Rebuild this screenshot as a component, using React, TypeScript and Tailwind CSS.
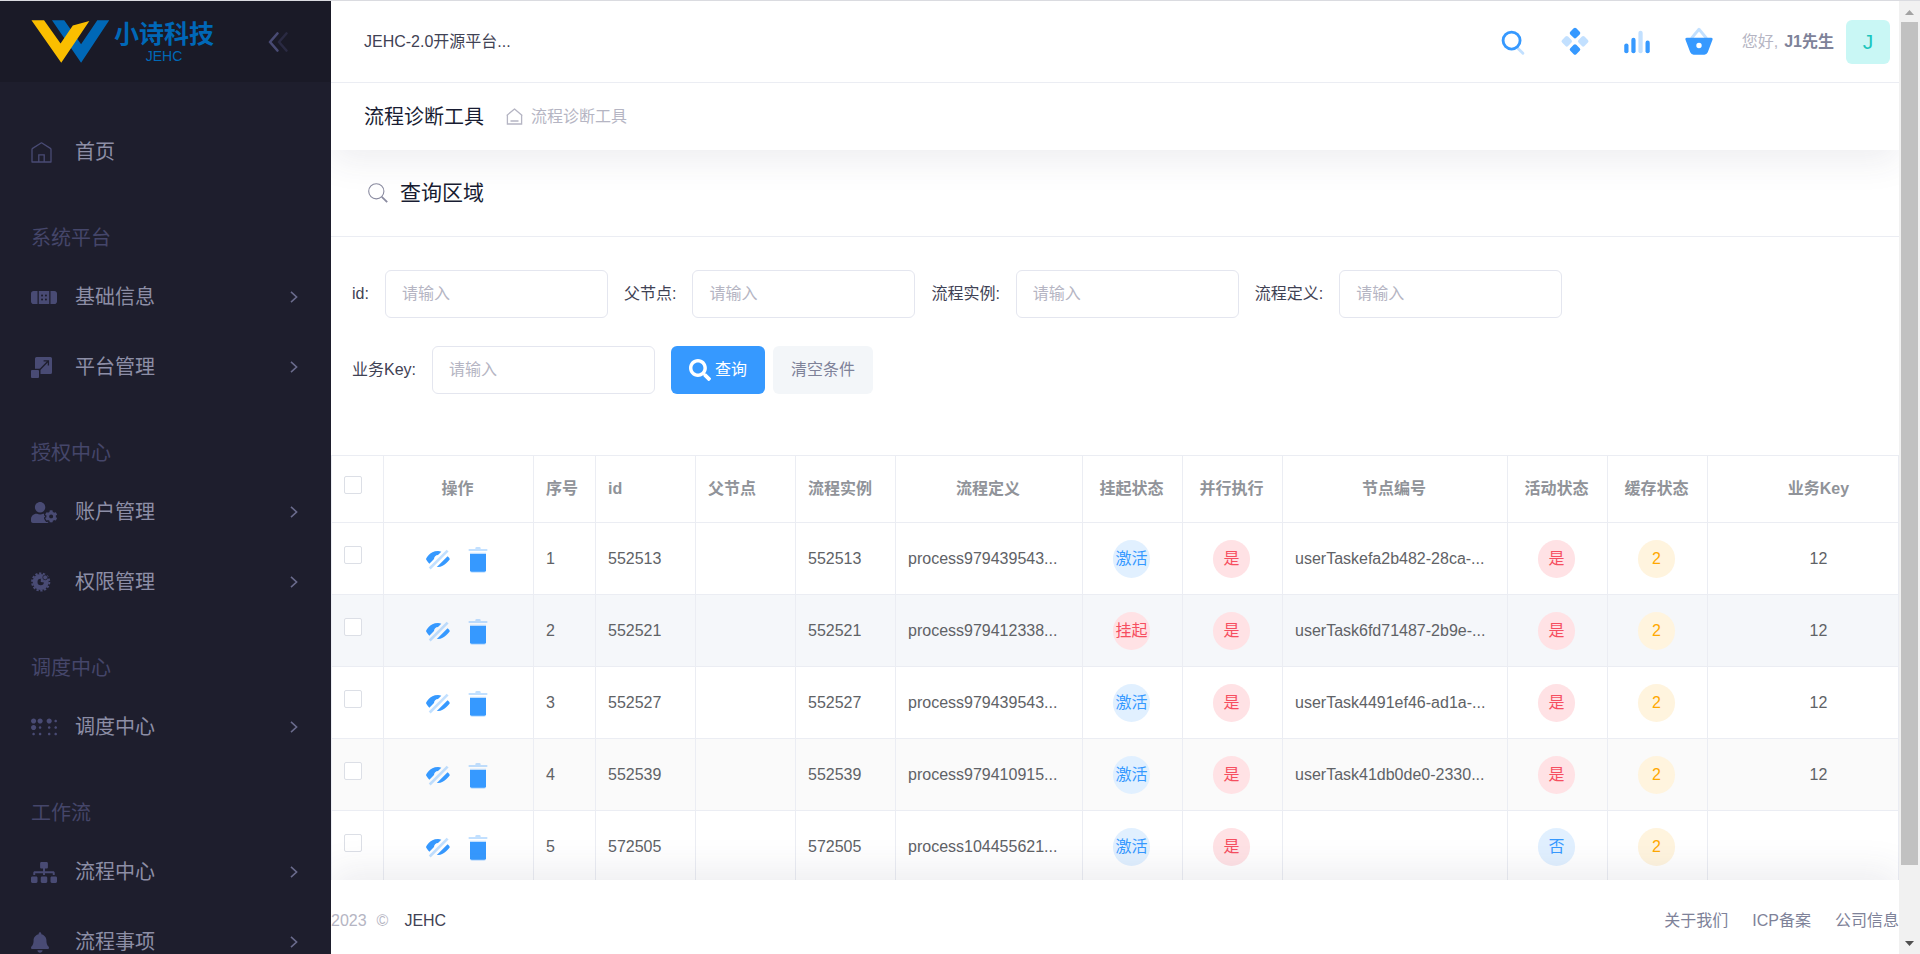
import React from 'react';
import { FaBandAid, FaBell, FaBraille, FaSearch, FaSitemap, FaUserCog } from 'react-icons/fa';

type Tone = 'primary' | 'danger' | 'warning';

interface ProcessRow {
  no: number;
  id: string;
  parent?: string;
  instance: string;
  definition: string;
  suspended: boolean;
  node: string;
  active: boolean;
  cache: number;
  businessKey: string;
}

interface MenuEntry {
  label: string;
  icon: React.ReactNode;
}

const rows: ProcessRow[] = [
  { no: 1, id: '552513', instance: '552513', definition: 'process979439543...', suspended: false, node: 'userTaskefa2b482-28ca-...', active: true, cache: 2, businessKey: '12' },
  { no: 2, id: '552521', instance: '552521', definition: 'process979412338...', suspended: true, node: 'userTask6fd71487-2b9e-...', active: true, cache: 2, businessKey: '12' },
  { no: 3, id: '552527', instance: '552527', definition: 'process979439543...', suspended: false, node: 'userTask4491ef46-ad1a-...', active: true, cache: 2, businessKey: '12' },
  { no: 4, id: '552539', instance: '552539', definition: 'process979410915...', suspended: false, node: 'userTask41db0de0-2330...', active: true, cache: 2, businessKey: '12' },
  { no: 5, id: '572505', instance: '572505', definition: 'process104455621...', suspended: false, node: '', active: false, cache: 2, businessKey: '' },
];

const Logo = () => (
  <a href="#" className="flex items-center gap-1">
    <svg viewBox="0 0 236 130" className="h-[43px] w-[79px]" aria-hidden="true">
      <path d="M62 1H99L150 73L199 1H235L150 129Z" fill="#0068b7" />
      <path d="M0 1H38L88 71L125 17L175 3L90 129Z" fill="#fabe00" />
    </svg>
    <span className="flex flex-col items-center text-[#0068b7]">
      <span className="text-[25px] leading-7 font-bold">小诗科技</span>
      <span className="text-sm leading-4">JEHC</span>
    </span>
  </a>
);

const HomeIcon = () => (
  <svg viewBox="0 0 21 21" className="h-[21px] w-[21px]" fill="none" stroke="currentColor" strokeWidth="1.3">
    <path d="M1 20V7.5Q1 6.8 1.6 6.4L10.5 .8L19.4 6.4Q20 6.8 20 7.5V20Z" strokeLinejoin="round" />
    <path d="M7.8 20V12.8H13.2V20" />
  </svg>
);

const ScaleIcon = () => (
  <svg viewBox="0 0 21 21" className="h-[21px] w-[21px]" fill="currentColor">
    <path d="M5.5 0H19.5Q21 0 21 1.5V15.5Q21 17 19.5 17H9.5V11.8H4V1.5Q4 0 5.5 0Z" />
    <path d="M9 12.5L17 4.2M12.6 3.8H17.4V8.6" fill="none" stroke="#1e1e2d" strokeWidth="1.3" />
    <rect x="0" y="13" width="8" height="8" rx="1" />
  </svg>
);

const GearIcon = () => (
  <svg viewBox="0 0 20 20" className="h-5 w-5" fill="none" stroke="currentColor">
    <circle cx="9.7" cy="10" r="8.6" strokeWidth="2" strokeDasharray="2.3 1.56" />
    <circle cx="9.7" cy="10" r="5.6" strokeWidth="4.8" />
    <path d="M9.7 10L13.2 10.6A3.4 3.4 0 0 0 9.9 6.6Z" fill="currentColor" stroke="none" />
    <circle cx="14.2" cy="5.4" r="2.4" fill="currentColor" stroke="#1e1e2d" strokeWidth="0.8" />
  </svg>
);

const sections: { title: string; items: MenuEntry[] }[] = [
  {
    title: '系统平台',
    items: [
      { label: '基础信息', icon: <FaBandAid className="h-[21px] w-[26px]" /> },
      { label: '平台管理', icon: <ScaleIcon /> },
    ],
  },
  {
    title: '授权中心',
    items: [
      { label: '账户管理', icon: <FaUserCog className="h-[21px] w-[26px]" /> },
      { label: '权限管理', icon: <GearIcon /> },
    ],
  },
  {
    title: '调度中心',
    items: [{ label: '调度中心', icon: <FaBraille className="h-[21px] w-[26px]" /> }],
  },
  {
    title: '工作流',
    items: [
      { label: '流程中心', icon: <FaSitemap className="h-[21px] w-[26px]" /> },
      { label: '流程事项', icon: <FaBell className="h-[21px] w-[18px]" /> },
    ],
  },
];

const MenuItem: React.FC<MenuEntry & { arrow?: boolean }> = ({ label, icon, arrow = true }) => (
  <li>
    <a href="#" className="flex h-[70px] items-center pr-[33px] pl-[31px] text-[20px] text-[#8d8ea6]">
      <span className="w-11 shrink-0 text-[#494b74]">{icon}</span>
      <span className="flex-1">{label}</span>
      {arrow && (
        <svg viewBox="0 0 8 12" className="h-3 w-2" fill="none" stroke="#6a6b8c" strokeWidth="1.6">
          <path d="M1 .8L6.6 6L1 11.2" />
        </svg>
      )}
    </a>
  </li>
);

const Sidebar = () => (
  <aside className="flex w-[331px] shrink-0 flex-col overflow-hidden bg-[#1e1e2d]">
    <div className="flex h-[81px] shrink-0 items-center justify-between bg-[#1a1a27] pr-[43px] pl-[31px]">
      <Logo />
      <button type="button" aria-label="收起菜单">
        <svg viewBox="0 0 20 20" className="h-5 w-5" fill="none" strokeWidth="2.6" strokeLinecap="round" strokeLinejoin="round">
          <path d="M9.4 1.5L2 10L9.4 18.5" stroke="#494b74" />
          <path d="M18.4 1.5L11 10L18.4 18.5" stroke="#2a2a42" />
        </svg>
      </button>
    </div>
    <nav className="pt-[35px]">
      <ul>
        <MenuItem label="首页" icon={<HomeIcon />} arrow={false} />
      </ul>
      {sections.map((section) => (
        <div key={section.title}>
          <h4 className="flex h-[75px] items-center pt-[26px] pl-[31px] text-[20px] text-[#45466a]">
            {section.title}
          </h4>
          <ul>
            {section.items.map((item) => (
              <MenuItem key={item.label} {...item} />
            ))}
          </ul>
        </div>
      ))}
    </nav>
  </aside>
);

const TopIcon: React.FC<{ label: string; children: React.ReactNode }> = ({ label, children }) => (
  <button type="button" aria-label={label} className="text-[#3699ff]">
    <svg viewBox="0 0 24 24" className="h-[34px] w-[34px]" fill="currentColor">
      {children}
    </svg>
  </button>
);

const Header = () => (
  <header className="relative z-10 flex h-[82px] shrink-0 items-center justify-between border-b border-[#ebedf3] bg-white pr-[9px] pl-[33px]">
    <span className="text-base text-[#3f4254]">JEHC-2.0开源平台...</span>
    <div className="flex items-center">
      <div className="mr-[26px] flex gap-7">
        <TopIcon label="搜索">
          <path d="M15 16L19 20" fill="none" stroke="currentColor" strokeWidth="2" strokeLinecap="round" opacity="0.3" />
          <circle cx="11" cy="11" r="6" fill="none" stroke="currentColor" strokeWidth="2" />
        </TopIcon>
        <TopIcon label="组件">
          <rect x="9" y="2.7" width="6" height="6" rx="1.3" transform="rotate(45 12 5.7)" />
          <rect x="9" y="14.3" width="6" height="6" rx="1.3" transform="rotate(45 12 17.3)" />
          <rect x="3.2" y="8.5" width="6" height="6" rx="1.3" transform="rotate(45 6.2 11.5)" opacity="0.3" />
          <rect x="14.8" y="8.5" width="6" height="6" rx="1.3" transform="rotate(45 17.8 11.5)" opacity="0.3" />
        </TopIcon>
        <TopIcon label="统计">
          <rect x="3" y="13" width="3" height="7" rx="1.5" />
          <rect x="8" y="9" width="3" height="11" rx="1.5" />
          <rect x="13" y="4" width="3" height="16" rx="1.5" opacity="0.3" />
          <rect x="18" y="11" width="3" height="9" rx="1.5" />
        </TopIcon>
        <TopIcon label="购物篮">
          <path d="M7 9L12 3L17 9" fill="none" stroke="currentColor" strokeWidth="2" strokeLinecap="round" strokeLinejoin="round" opacity="0.3" />
          <path
            fillRule="evenodd"
            d="M3.3 9H20.7Q21.9 9.2 21.6 10.2L18.2 19.3Q17.4 21 15.8 21H8.2Q6.6 21 5.8 19.3L2.4 10.2Q2.1 9.2 3.3 9ZM12 12.6A1.9 1.9 0 1 0 12 16.4A1.9 1.9 0 1 0 12 12.6Z"
          />
        </TopIcon>
      </div>
      <a href="#" className="flex items-center text-base">
        <span className="mr-1.5 text-[#b5b5c3]">您好,</span>
        <span className="mr-3 font-bold text-[#7e8299]">J1先生</span>
        <span className="flex h-11 w-11 items-center justify-center rounded-md bg-[#c9f7f5] text-[21px] text-[#1bc5bd]">J</span>
      </a>
    </div>
  </header>
);

const SubHeader = () => (
  <div className="relative flex h-[67px] shrink-0 items-center bg-white pl-[33px] shadow-[0_10px_36px_rgba(60,60,90,0.09)]">
    <h1 className="mr-[22px] text-[20px] text-[#181c32]">流程诊断工具</h1>
    <a href="#" className="flex items-center gap-2 text-base text-[#b5b5c3]">
      <svg viewBox="0 0 17 17" className="h-[17px] w-[17px]" fill="none" stroke="currentColor" strokeWidth="1.3">
        <path d="M.8 7.4L8.5 1L16.2 7.4" strokeLinejoin="round" />
        <path d="M1.4 7V16H15.6V7M4.5 13H12.5" />
      </svg>
      流程诊断工具
    </a>
  </div>
);

const Field: React.FC<{ name: string; label: string }> = ({ name, label }) => (
  <div className="flex items-center gap-4">
    <label htmlFor={name} className="text-base text-[#3f4254]">
      {label}:
    </label>
    <input
      id={name}
      type="text"
      placeholder="请输入"
      className="h-12 w-[223px] rounded-md border border-[#e4e6ef] bg-white px-4 text-base text-[#3f4254] outline-none placeholder:text-[#b5b5c3]"
    />
  </div>
);

const SearchForm = () => (
  <form className="flex flex-wrap gap-x-4 gap-y-7 pt-[33px] pr-8 pb-[61px] pl-[21px]" onSubmit={(e) => e.preventDefault()}>
    <Field name="id" label="id" />
    <Field name="parent" label="父节点" />
    <Field name="instance" label="流程实例" />
    <Field name="definition" label="流程定义" />
    <Field name="businessKey" label="业务Key" />
    <div className="flex gap-2">
      <button type="submit" className="flex h-12 items-center gap-1 rounded-md bg-[#3699ff] px-[18px] text-base text-white">
        <FaSearch className="h-[22px] w-[22px]" />
        查询
      </button>
      <button type="reset" className="h-12 rounded-md bg-[#f3f6f9] px-[18px] text-base text-[#7e8299]">
        清空条件
      </button>
    </div>
  </form>
);

const badgeTones: Record<Tone, string> = {
  primary: 'bg-[#e1f0ff] text-[#3699ff]',
  danger: 'bg-[#ffe2e5] text-[#f64e60]',
  warning: 'bg-[#fff4de] text-[#ffa800]',
};

const Badge: React.FC<{ tone: Tone; children: React.ReactNode }> = ({ tone, children }) => (
  <span className={`mx-auto flex h-[38px] w-[37px] items-center justify-center rounded-full whitespace-nowrap ${badgeTones[tone]}`}>
    {children}
  </span>
);

const Th: React.FC<{ center?: boolean; children: React.ReactNode }> = ({ center, children }) => (
  <th className={`h-[67px] border-r border-b border-[#ebedf3] pr-3.5 pl-3 font-bold whitespace-nowrap ${center ? 'text-center' : 'text-left'}`}>
    {children}
  </th>
);

const Td: React.FC<{ center?: boolean; children?: React.ReactNode }> = ({ center, children }) => (
  <td className={`h-[72px] overflow-hidden border-r border-b border-[#ebedf3] pr-3.5 pl-3 whitespace-nowrap ${center ? 'text-center' : 'text-left'}`}>
    {children}
  </td>
);

const Check: React.FC<{ label: string }> = ({ label }) => (
  <input
    type="checkbox"
    aria-label={label}
    className="mb-2 block h-[18px] w-[18px] appearance-none rounded-xs border border-[#dcdfe6] bg-white"
  />
);

const RowActions = () => (
  <div className="flex justify-center gap-2 text-[#3699ff]">
    <button type="button" aria-label="隐藏">
      <svg viewBox="0 0 24 24" className="h-8 w-8" fill="currentColor">
        <path d="M19.2 9.85C20.33 11.02 21 12 21 12S16.9 18 12 18C11.69 18 11.39 17.99 11.1 17.96Z" />
        <path d="M14.5 6.5L12 9C10.34 9 9 10.34 9 12L5.53 15.47C3.75 13.83 3 12 3 12S5.45 6 12 6C12.87 6 13.7 6.19 14.5 6.5Z" />
        <rect x="3" y="11.4" width="19" height="2" transform="rotate(-45 12.5 12.4)" opacity="0.3" />
      </svg>
    </button>
    <button type="button" aria-label="删除">
      <svg viewBox="0 0 24 24" className="h-8 w-8" fill="currentColor">
        <path d="M6 7.4H18V20.8Q18 22.3 16.5 22.3H7.5Q6 22.3 6 20.8Z" opacity="0.3" />
        <path d="M6 8.2H18V20.5Q18 21.6 16.8 21.6H7.2Q6 21.6 6 20.5Z" />
        <path d="M14 4.5V4Q14 3 13 3H11Q10 3 10 4V4.5H5V6H19V4.5Z" opacity="0.3" />
      </svg>
    </button>
  </div>
);

const ProcessTable = () => (
  <div className="overflow-hidden border-x border-t border-[#ebedf3]">
    <table className="w-full min-w-[1600px] table-fixed border-separate border-spacing-0 text-base text-[#606266]">
      <colgroup>
        <col className="w-[52px]" />
        <col className="w-[150px]" />
        <col className="w-[62px]" />
        <col className="w-[100px]" />
        <col className="w-[100px]" />
        <col className="w-[100px]" />
        <col className="w-[187px]" />
        <col className="w-[100px]" />
        <col className="w-[100px]" />
        <col className="w-[225px]" />
        <col className="w-[100px]" />
        <col className="w-[100px]" />
        <col />
      </colgroup>
      <thead className="text-[#909399]">
        <tr>
          <Th>
            <Check label="全选" />
          </Th>
          <Th center>操作</Th>
          <Th>序号</Th>
          <Th>id</Th>
          <Th>父节点</Th>
          <Th>流程实例</Th>
          <Th center>流程定义</Th>
          <Th center>挂起状态</Th>
          <Th center>并行执行</Th>
          <Th center>节点编号</Th>
          <Th center>活动状态</Th>
          <Th center>缓存状态</Th>
          <Th center>业务Key</Th>
        </tr>
      </thead>
      <tbody>
        {rows.map((row) => (
          <tr key={row.id} className={row.no === 2 ? 'bg-[#f5f7fa]' : row.no % 2 === 0 ? 'bg-[#fafafa]' : 'bg-white'}>
            <Td>
              <Check label={`选择 ${row.id}`} />
            </Td>
            <Td>
              <RowActions />
            </Td>
            <Td>{row.no}</Td>
            <Td>{row.id}</Td>
            <Td>{row.parent}</Td>
            <Td>{row.instance}</Td>
            <Td>{row.definition}</Td>
            <Td>
              <Badge tone={row.suspended ? 'danger' : 'primary'}>{row.suspended ? '挂起' : '激活'}</Badge>
            </Td>
            <Td>
              <Badge tone="danger">是</Badge>
            </Td>
            <Td>{row.node}</Td>
            <Td>
              <Badge tone={row.active ? 'danger' : 'primary'}>{row.active ? '是' : '否'}</Badge>
            </Td>
            <Td>
              <Badge tone="warning">{row.cache}</Badge>
            </Td>
            <Td center>{row.businessKey}</Td>
          </tr>
        ))}
      </tbody>
    </table>
  </div>
);

const Footer = () => (
  <footer className="relative flex h-[74px] shrink-0 items-center justify-between bg-white pt-2 text-base shadow-[0_-10px_36px_rgba(60,60,90,0.09)]">
    <div className="flex text-[#b5b5c3]">
      <span className="mr-2.5">2023</span>
      <span className="mr-4">©</span>
      <a href="#" className="text-[#3f4254]">JEHC</a>
    </div>
    <div className="flex gap-6 text-[#7e8299]">
      <a href="#">关于我们</a>
      <a href="#">ICP备案</a>
      <a href="#">公司信息</a>
    </div>
  </footer>
);

// Page scroll track with its two arrows
const ScrollTrack = () => (
  <div className="flex w-[21px] shrink-0 flex-col items-center bg-[#f1f1f1]" aria-hidden="true">
    <svg viewBox="0 0 21 21" className="h-[21px] w-[21px]">
      <path d="M6 14L10.5 9L15 14Z" fill="#a3a3a3" />
    </svg>
    <div className="h-[843px] min-h-0 w-[17px] bg-[#c1c1c1]" />
    <svg viewBox="0 0 21 21" className="mt-auto h-[21px] w-[21px]">
      <path d="M6 8L10.5 13L15 8Z" fill="#505050" />
    </svg>
  </div>
);

export default function App() {
  return (
    <div className="flex h-screen overflow-hidden border-t border-[#dadbe0] bg-white font-['Liberation_Sans','Noto_Sans_CJK_SC',sans-serif]">
      <Sidebar />
      <div className="flex min-w-0 flex-1 flex-col overflow-hidden">
        <Header />
        <SubHeader />
        <main className="min-h-0 flex-1 overflow-hidden">
          <div className="flex h-[87px] items-center gap-3 border-b border-[#ebedf3] pl-[37px]">
            <svg viewBox="0 0 20 20" className="h-5 w-5" fill="none" stroke="#8a8ba0" strokeWidth="1.1">
              <circle cx="8.3" cy="8.3" r="7.6" />
              <path d="M13.8 13.8L19.2 19.2" strokeWidth="1.8" />
            </svg>
            <h3 className="text-[21px] text-[#181c32]">查询区域</h3>
          </div>
          <SearchForm />
          <ProcessTable />
        </main>
        <Footer />
      </div>
      <ScrollTrack />
    </div>
  );
}
